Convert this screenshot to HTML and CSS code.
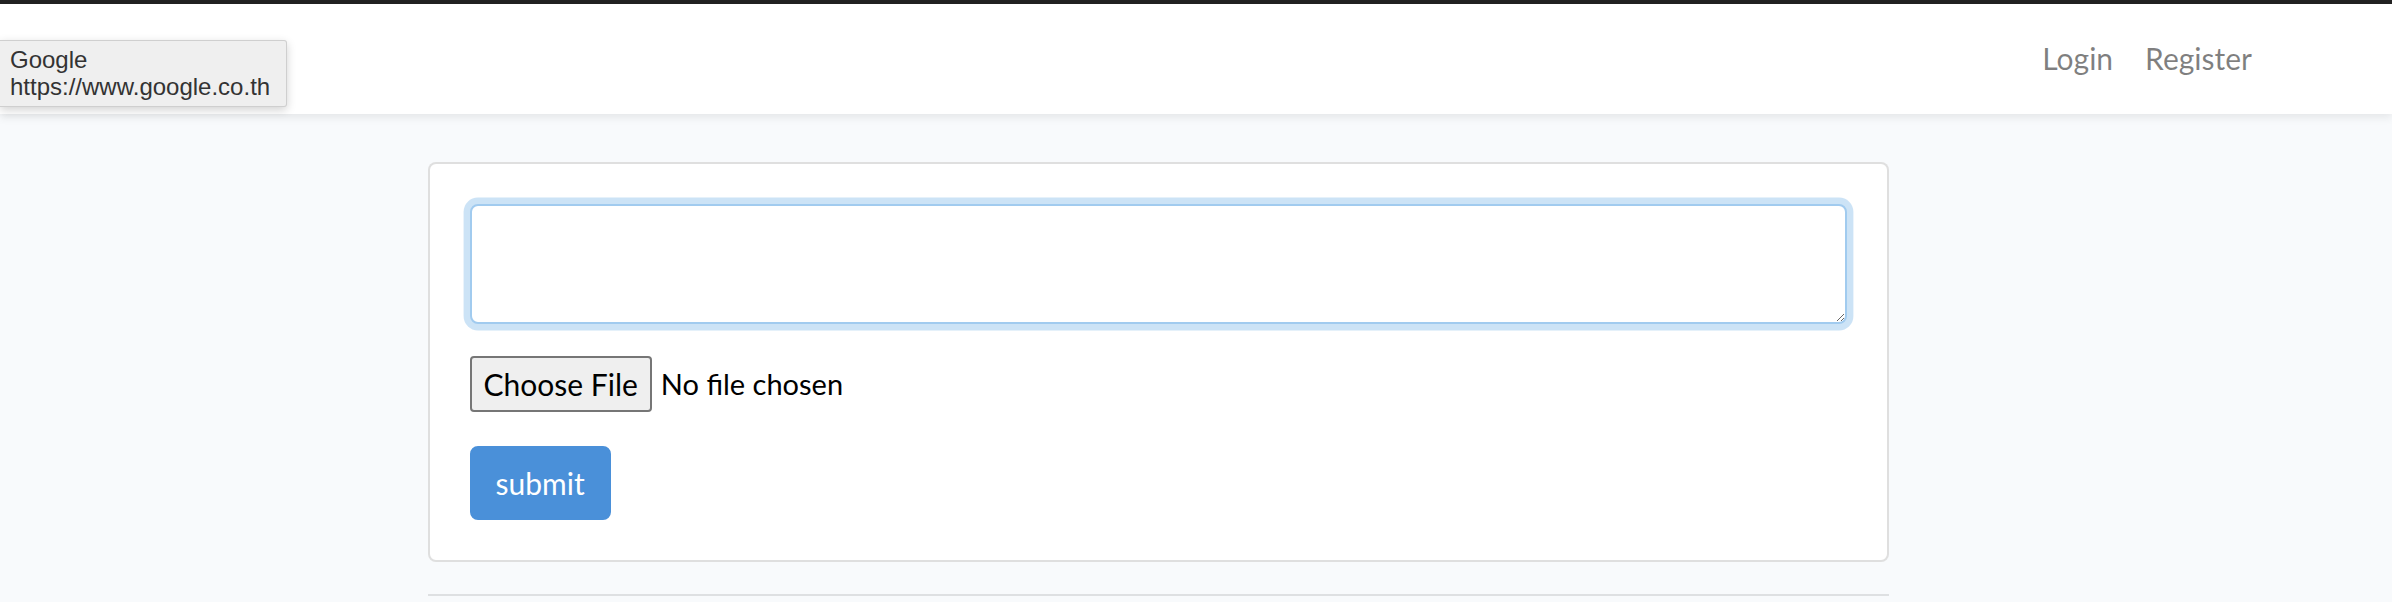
FILE: index.html
```html
<!DOCTYPE html>
<html lang="en">
<head>
<meta charset="utf-8">
<title>Laravel</title>
<link rel="stylesheet" href="styles.css">
</head>
<body>
<div class="topbar"></div>
<nav class="navbar">
  <div class="container nav-inner">
    <ul class="nav-links">
      <li><a class="nav-link" href="#">Login</a></li>
      <li><a class="nav-link" href="#">Register</a></li>
    </ul>
  </div>
</nav>
<div class="tooltip">
  <div>Google</div>
  <div>https://www.google.co.th</div>
</div>
<main class="main">
  <div class="container row">
    <div class="col">
      <div class="card">
        <form class="card-body">
          <div class="form-group">
            <textarea class="form-control" rows="2"></textarea>
          </div>
          <div class="form-group file-row">
            <button type="button" class="file-btn">Choose File</button>
            <span class="file-name">No file chosen</span>
          </div>
          <button type="submit" class="btn-primary">submit</button>
        </form>
      </div>
      <hr class="divider">
    </div>
  </div>
</main>
</body>
</html>
```
FILE: styles.css
```css
* { box-sizing: border-box; }
html, body { margin: 0; padding: 0; }
body {
  background: #f8fafc;
  font-family: "Lato", "Noto Sans", sans-serif;
  font-size: 30px;
  line-height: 46px;
  color: #212529;
  position: relative;
  height: 602px;
  overflow: hidden;
}
.topbar { height: 4px; background: #222; }
.navbar {
  background: #fff;
  height: 110px;
  box-shadow: 0 4px 8px rgba(0,0,0,0.075);
  position: relative;
  z-index: 1;
}
.container {
  width: 2280px;
  margin-left: 18px;
  padding: 0 30px;
}
.nav-inner {
  height: 100%;
  display: flex;
  justify-content: flex-end;
  align-items: center;
  padding-bottom: 2px;
}
.nav-links {
  list-style: none;
  margin: 0;
  padding: 0;
  display: flex;
}
.nav-link {
  display: block;
  padding: 16px 16px;
  color: rgba(0,0,0,0.5);
  text-decoration: none;
}
.tooltip {
  position: absolute;
  left: 0;
  top: 40px;
  width: 287px;
  height: 67px;
  padding: 5px 0 0 10px;
  background: #efefef;
  border: 1px solid #cfcfcf;
  border-left: none;
  border-radius: 0 3px 3px 0;
  box-shadow: 0 3px 10px rgba(0,0,0,0.18);
  font-family: "Liberation Sans", Arial, sans-serif;
  font-size: 24px;
  line-height: 27px;
  color: #333;
  z-index: 5;
}
.main { padding-top: 48px; }
.row {
  display: flex;
  justify-content: center;
}
.col { width: 1461px; }
.card {
  background: #fff;
  border: 2px solid rgba(0,0,0,0.125);
  border-radius: 8px;
}
.card-body { padding: 40px; margin: 0; }
.form-group { margin-bottom: 32px; }
.form-control {
  display: block;
  width: 100%;
  height: 120px;
  padding: 12px 24px;
  border: 2px solid #a1cbef;
  border-radius: 8px;
  box-shadow: 0 0 0 6.4px rgba(52,144,220,0.25);
  outline: none;
  font: inherit;
  resize: vertical;
  background: #fff;
}
.file-row {
  display: flex;
  align-items: center;
  height: 56px;
  margin-bottom: 34px;
}
.file-btn {
  height: 56px;
  padding: 0 12px;
  background: #efefef;
  border: 2px solid #767676;
  border-radius: 4px;
  font: inherit;
  color: #000;
  line-height: 1;
}
.file-name {
  margin-left: 9px;
  font-size: 29px;
  color: #000;
}
.btn-primary {
  display: block;
  height: 74px;
  padding: 0 24px;
  background: #4a90d9;
  border: 2px solid #4a90d9;
  border-radius: 8px;
  color: #fff;
  font: inherit;
  line-height: 1;
}
.divider {
  margin: 32px 0 0;
  border: 0;
  border-top: 2px solid rgba(0,0,0,0.1);
}
```
